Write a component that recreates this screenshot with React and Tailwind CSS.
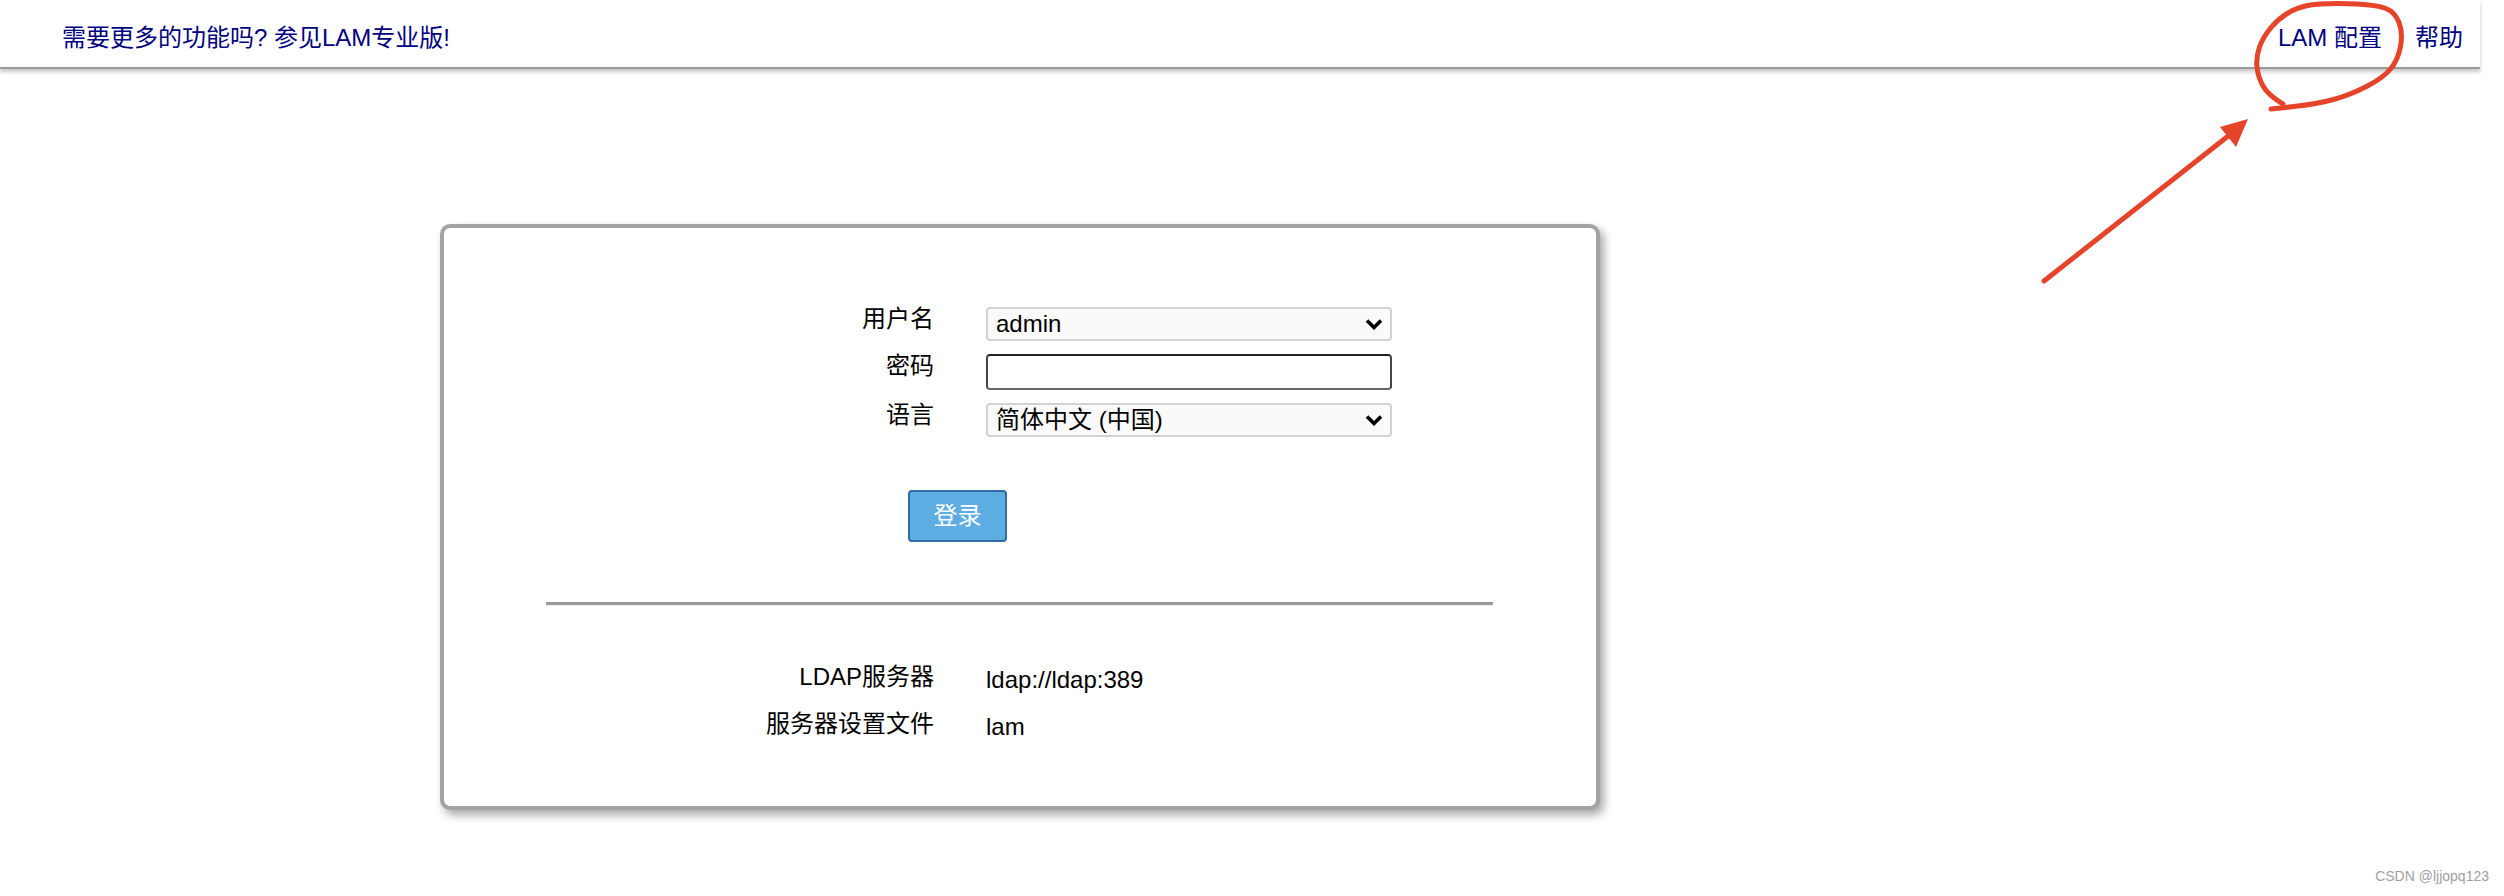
import React from "react";

// smooth a list of points into a quadratic path (for the hand-drawn loop)
const smoothPath = (pts) => {
  let d = `M${pts[0][0]} ${pts[0][1]}`;
  for (let i = 1; i < pts.length - 1; i++) {
    const mx = (pts[i][0] + pts[i + 1][0]) / 2;
    const my = (pts[i][1] + pts[i + 1][1]) / 2;
    d += ` Q${pts[i][0]} ${pts[i][1]} ${mx} ${my}`;
  }
  const last = pts[pts.length - 1];
  return d + ` L${last[0]} ${last[1]}`;
};

const loop = [
  [2283, 104],
  [2268, 95],
  [2258, 77],
  [2256, 57],
  [2263, 37],
  [2280, 17],
  [2303, 5],
  [2337, 3],
  [2377, 5],
  [2395, 12],
  [2403, 33],
  [2398, 60],
  [2383, 78],
  [2350, 95],
  [2317, 104],
  [2271, 109],
];

const Chevron = () => (
  <svg width="18" height="12" viewBox="0 0 18 12" className="shrink-0">
    <path d="M2 2.5 L9 9.5 L16 2.5" fill="none" stroke="#000" strokeWidth="3.6" />
  </svg>
);

const FakeSelect = ({ value }) => (
  <div className="flex h-[34px] w-[406px] items-center justify-between rounded-[4px] border-2 border-[#d2d2d2] bg-[#fafafa] pl-[8px] pr-[7px] text-[24px] leading-none text-black">
    <span>{value}</span>
    <Chevron />
  </div>
);

const Label = ({ children }) => (
  <div className="text-right text-[24px] leading-[24px] text-black">{children}</div>
);

export default function App() {
  return (
    <div className="relative min-h-[896px] w-full overflow-hidden bg-white font-['Liberation_Sans','Noto_Sans_CJK_SC',sans-serif]">
      {/* Header */}
      <div className="flex h-[69px] w-[2480px] items-center justify-between border-b-2 border-[#9a9a9a] pl-[62px] pr-[17px] pt-[8px] shadow-[0_3px_4px_rgba(0,0,0,0.22)]">
        <a className="text-[24px] text-[#000080]">需要更多的功能吗? 参见LAM专业版!</a>
        <div className="flex gap-[33px] text-[24px] text-[#000080]">
          <a>LAM 配置</a>
          <a>帮助</a>
        </div>
      </div>

      {/* Login box */}
      <div className="ml-[440px] mt-[155px] h-[586px] w-[1160px] rounded-[10px] border-4 border-[#a3a3a6] bg-white pt-[79px] shadow-[4px_5px_10px_rgba(0,0,0,0.35)]">
        <div className="grid grid-cols-[490px_406px] gap-x-[52px] gap-y-[13px]">
          <Label>用户名</Label>
          <FakeSelect value="admin" />
          <Label>密码</Label>
          <input
            type="password"
            className="h-[36px] w-[406px] rounded-[4px] border-2 border-t-[#222] border-x-[#444] border-b-[#666] bg-white outline-none"
          />
          <Label>语言</Label>
          <FakeSelect value="简体中文 (中国)" />
        </div>

        <div className="ml-[464px] mt-[53px]">
          <button className="h-[52px] w-[99px] rounded-[4px] border-2 border-[#2f6ea6] bg-[#5dade2] text-[24px] text-white">
            登录
          </button>
        </div>

        <div className="ml-[102px] mt-[60px] w-[947px] border-t-[3px] border-b border-t-[#9a9a9a] border-b-[#ececec]" />

        <div className="mt-[59px] grid grid-cols-[490px_auto] items-start gap-x-[52px] gap-y-[20px] text-[24px] leading-[24px] text-black">
          <div className="text-right">LDAP服务器</div>
          <div className="pt-[3px]">ldap://ldap:389</div>
          <div className="text-right">服务器设置文件</div>
          <div className="pt-[3px]">lam</div>
        </div>
      </div>

      {/* annotation drawn on top of the screenshot */}
      <svg
        className="pointer-events-none absolute left-0 top-0"
        width="2504"
        height="896"
        viewBox="0 0 2504 896"
      >
        <path
          d={smoothPath(loop)}
          fill="none"
          stroke="#e5432a"
          strokeWidth="5"
          strokeLinecap="round"
          strokeLinejoin="round"
        />
        <line x1="2044" y1="281" x2="2232" y2="133" stroke="#e5432a" strokeWidth="5" strokeLinecap="round" />
        <polygon points="2248,119 2220,127 2236,147" fill="#e5432a" />
      </svg>

      <div className="absolute bottom-[9px] right-[15px] text-[14px] text-[#a0a0a0]">CSDN @ljjopq123</div>
    </div>
  );
}
